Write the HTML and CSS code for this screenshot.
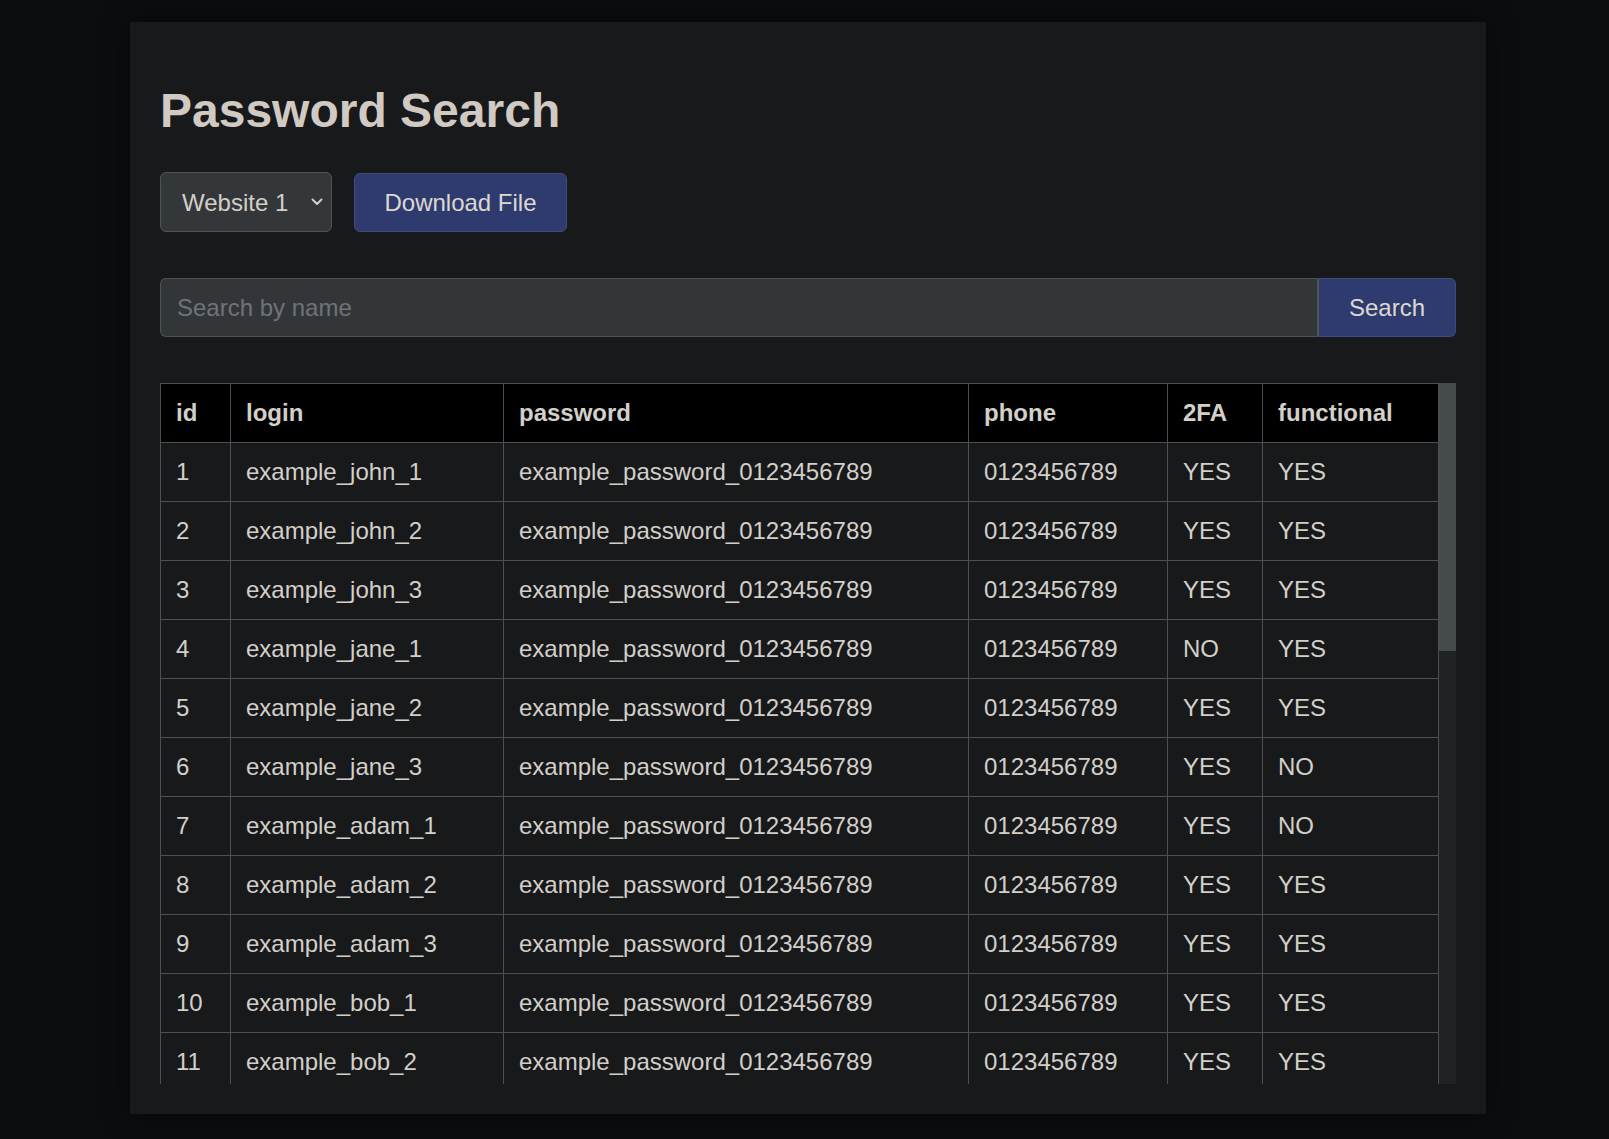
FILE: index.html
```html
<!DOCTYPE html>
<html lang="en">
<head>
<meta charset="utf-8">
<title>Password Search</title>
<link rel="stylesheet" href="styles.css">
</head>
<body>
<main class="card">
  <h1 class="title">Password Search</h1>
  <div class="controls">
    <div class="select-wrap">
      <select class="site-select">
        <option>Website 1</option>
        <option>Website 2</option>
        <option>Website 3</option>
      </select>
      <svg class="chevron" width="12" height="8" viewBox="0 0 12 8"><path d="M1.5 1.5 L6 6 L10.5 1.5" fill="none" stroke="#d3cfc9" stroke-width="2" stroke-linecap="round" stroke-linejoin="round"/></svg>
    </div>
    <button class="btn btn-download">Download File</button>
  </div>
  <div class="search-group">
    <input class="search-input" type="text" placeholder="Search by name">
    <button class="btn btn-search">Search</button>
  </div>
  <div class="table-area">
    <div class="table-wrap">
      <table class="data-table">
        <colgroup>
          <col class="c-id"><col class="c-login"><col class="c-pass"><col class="c-phone"><col class="c-2fa"><col class="c-func">
        </colgroup>
        <thead>
          <tr><th>id</th><th>login</th><th>password</th><th>phone</th><th>2FA</th><th>functional</th></tr>
        </thead>
        <tbody>
          <tr><td>1</td><td>example_john_1</td><td>example_password_0123456789</td><td>0123456789</td><td>YES</td><td>YES</td></tr>
          <tr><td>2</td><td>example_john_2</td><td>example_password_0123456789</td><td>0123456789</td><td>YES</td><td>YES</td></tr>
          <tr><td>3</td><td>example_john_3</td><td>example_password_0123456789</td><td>0123456789</td><td>YES</td><td>YES</td></tr>
          <tr><td>4</td><td>example_jane_1</td><td>example_password_0123456789</td><td>0123456789</td><td>NO</td><td>YES</td></tr>
          <tr><td>5</td><td>example_jane_2</td><td>example_password_0123456789</td><td>0123456789</td><td>YES</td><td>YES</td></tr>
          <tr><td>6</td><td>example_jane_3</td><td>example_password_0123456789</td><td>0123456789</td><td>YES</td><td>NO</td></tr>
          <tr><td>7</td><td>example_adam_1</td><td>example_password_0123456789</td><td>0123456789</td><td>YES</td><td>NO</td></tr>
          <tr><td>8</td><td>example_adam_2</td><td>example_password_0123456789</td><td>0123456789</td><td>YES</td><td>YES</td></tr>
          <tr><td>9</td><td>example_adam_3</td><td>example_password_0123456789</td><td>0123456789</td><td>YES</td><td>YES</td></tr>
          <tr><td>10</td><td>example_bob_1</td><td>example_password_0123456789</td><td>0123456789</td><td>YES</td><td>YES</td></tr>
          <tr><td>11</td><td>example_bob_2</td><td>example_password_0123456789</td><td>0123456789</td><td>YES</td><td>YES</td></tr>
          <tr><td>12</td><td>example_bob_3</td><td>example_password_0123456789</td><td>0123456789</td><td>YES</td><td>YES</td></tr>
          <tr><td>13</td><td>example_alice_1</td><td>example_password_0123456789</td><td>0123456789</td><td>YES</td><td>YES</td></tr>
          <tr><td>14</td><td>example_alice_2</td><td>example_password_0123456789</td><td>0123456789</td><td>NO</td><td>YES</td></tr>
          <tr><td>15</td><td>example_alice_3</td><td>example_password_0123456789</td><td>0123456789</td><td>YES</td><td>YES</td></tr>
          <tr><td>16</td><td>example_mike_1</td><td>example_password_0123456789</td><td>0123456789</td><td>YES</td><td>NO</td></tr>
          <tr><td>17</td><td>example_mike_2</td><td>example_password_0123456789</td><td>0123456789</td><td>YES</td><td>YES</td></tr>
          <tr><td>18</td><td>example_mike_3</td><td>example_password_0123456789</td><td>0123456789</td><td>YES</td><td>YES</td></tr>
          <tr><td>19</td><td>example_sara_1</td><td>example_password_0123456789</td><td>0123456789</td><td>YES</td><td>YES</td></tr>
          <tr><td>20</td><td>example_sara_2</td><td>example_password_0123456789</td><td>0123456789</td><td>NO</td><td>YES</td></tr>
          <tr><td>21</td><td>example_sara_3</td><td>example_password_0123456789</td><td>0123456789</td><td>YES</td><td>YES</td></tr>
          <tr><td>22</td><td>example_tom_1</td><td>example_password_0123456789</td><td>0123456789</td><td>YES</td><td>YES</td></tr>
          <tr><td>23</td><td>example_tom_2</td><td>example_password_0123456789</td><td>0123456789</td><td>YES</td><td>NO</td></tr>
          <tr><td>24</td><td>example_tom_3</td><td>example_password_0123456789</td><td>0123456789</td><td>YES</td><td>YES</td></tr>
          <tr><td>25</td><td>example_emma_1</td><td>example_password_0123456789</td><td>0123456789</td><td>YES</td><td>YES</td></tr>
          <tr><td>26</td><td>example_emma_2</td><td>example_password_0123456789</td><td>0123456789</td><td>YES</td><td>YES</td></tr>
          <tr><td>27</td><td>example_emma_3</td><td>example_password_0123456789</td><td>0123456789</td><td>NO</td><td>YES</td></tr>
          <tr><td>28</td><td>example_david_1</td><td>example_password_0123456789</td><td>0123456789</td><td>YES</td><td>YES</td></tr>
          <tr><td>29</td><td>example_david_2</td><td>example_password_0123456789</td><td>0123456789</td><td>YES</td><td>YES</td></tr>
          <tr><td>30</td><td>example_david_3</td><td>example_password_0123456789</td><td>0123456789</td><td>YES</td><td>YES</td></tr>
        </tbody>
      </table>
    </div>
    <div class="scrollbar"><div class="scroll-thumb"></div></div>
  </div>
</main>
</body>
</html>
```
FILE: styles.css
```css
* { box-sizing: border-box; }

html, body {
  margin: 0;
  padding: 0;
  background: #0c0d0f;
}

body {
  font-family: "Liberation Sans", Arial, sans-serif;
  color: #d3cfc9;
  overflow: hidden;
  height: 1139px;
}

.card {
  width: 1356px;
  height: 1092px;
  margin: 22px 0 0 130px;
  padding: 60px 30px 30px 30px;
  background: #18191b;
  box-shadow: 0 0 24px rgba(0, 0, 0, 0.55);
  display: flex;
  flex-direction: column;
}

.title {
  margin: 0 0 32px 0;
  font-size: 48px;
  line-height: 58px;
  font-weight: 700;
  color: #d0cac3;
}

.controls {
  display: flex;
  align-items: flex-end;
  gap: 22px;
  height: 60px;
}

.select-wrap {
  position: relative;
  width: 172px;
  height: 60px;
}

.site-select {
  -webkit-appearance: none;
  appearance: none;
  width: 100%;
  height: 100%;
  margin: 0;
  padding: 0 30px 0 21px;
  font-family: inherit;
  font-size: 24px;
  color: #d3cfc9;
  background: #33373a;
  border: 1px solid #4d5356;
  border-radius: 6px;
  outline: none;
}

.chevron {
  position: absolute;
  right: 9px;
  top: 26px;
  pointer-events: none;
}

.btn {
  font-family: inherit;
  font-size: 24px;
  color: #dcd8d2;
  background: #2f3b6e;
  border: 1px solid #3f4a7e;
  cursor: pointer;
  margin: 0;
}

.btn-download {
  width: 213px;
  height: 59px;
  padding: 0;
  border-radius: 6px;
}

.search-group {
  display: flex;
  margin-top: 46px;
  height: 59px;
}

.search-input {
  flex: 1;
  height: 100%;
  margin: 0;
  padding: 0 16px;
  font-family: inherit;
  font-size: 24px;
  color: #d3cfc9;
  background: #333639;
  border: 1px solid #4d5356;
  border-right: none;
  border-radius: 6px 0 0 6px;
  outline: none;
}

.search-input::placeholder {
  color: #6f7377;
}

.btn-search {
  width: 139px;
  height: 100%;
  padding: 0;
  border-radius: 0 6px 6px 0;
  border-color: #3f4a7e;
  border-left: 2px solid #505558;
}

.table-area {
  display: flex;
  margin-top: 46px;
  height: 701px;
}

.table-wrap {
  flex: 1;
  min-width: 0;
  height: 100%;
  overflow: hidden;
}

.scrollbar {
  width: 17px;
  height: 100%;
  background: #202324;
  flex-shrink: 0;
}

.scroll-thumb {
  height: 268px;
  background: #454a4c;
}

.data-table {
  width: 100%;
  border-collapse: collapse;
  table-layout: fixed;
  font-size: 24px;
}

.c-id { width: 70px; }
.c-login { width: 273px; }
.c-pass { width: 465px; }
.c-phone { width: 199px; }
.c-2fa { width: 95px; }
.c-func { width: auto; }

.data-table th,
.data-table td {
  border: 1px solid #4b5054;
  padding: 15px 15px;
  line-height: 28px;
  text-align: left;
  white-space: nowrap;
  overflow: hidden;
}

.data-table th {
  background: #000;
  font-weight: 700;
  color: #d3cfc9;
}

.data-table td {
  background: #18191b;
  color: #d3cfc9;
}
```
